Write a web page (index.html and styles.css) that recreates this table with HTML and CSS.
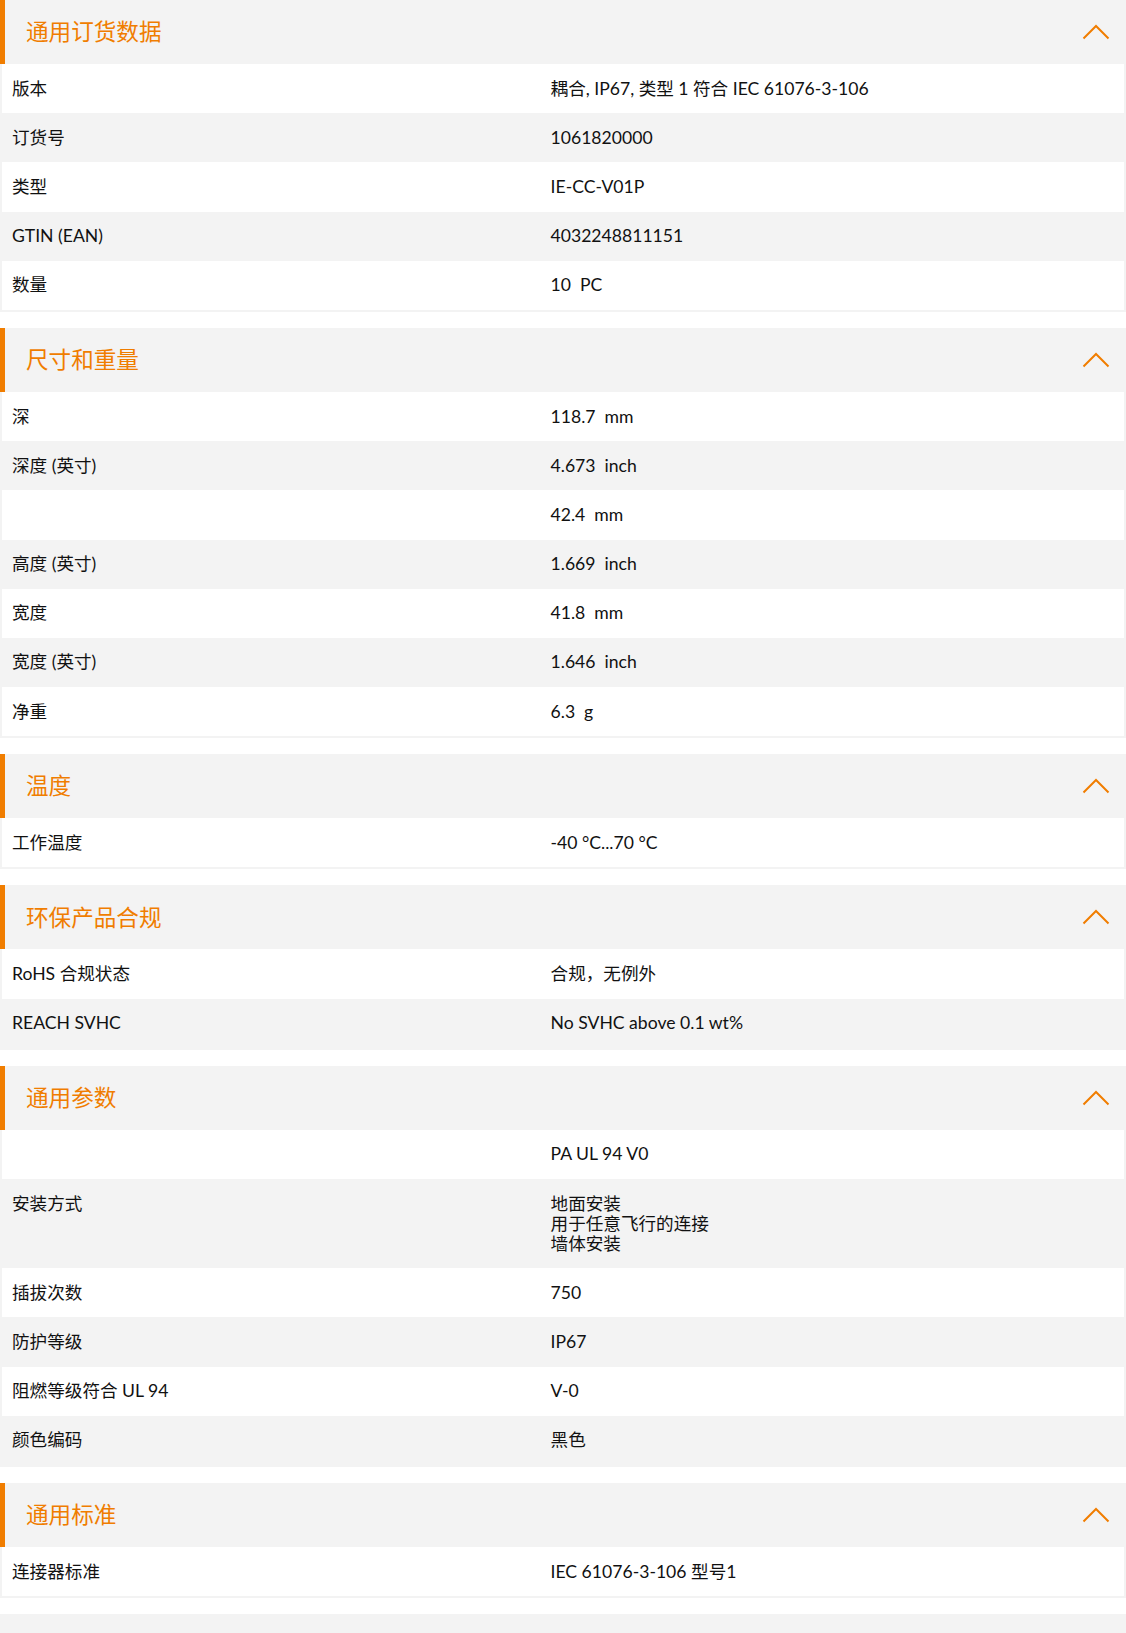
FILE: index.html
```html
<!DOCTYPE html>
<html lang="zh-CN">
<head>
<meta charset="utf-8">
<title>产品数据</title>
<link rel="stylesheet" href="styles.css">
</head>
<body>
<div class="page">

  <section class="spec">
    <div class="spec-head">
      <h2 class="spec-title">通用订货数据</h2>
      <svg class="chev" width="28" height="16" viewBox="0 0 28 16"><polyline points="1.5,14.5 14,2 26.5,14.5" fill="none" stroke="#f07d00" stroke-width="2"/></svg>
    </div>
    <div class="spec-body">
      <div class="row"><div class="k">版本</div><div class="v">耦合, IP67, 类型 1 符合 IEC 61076-3-106</div></div>
      <div class="row"><div class="k">订货号</div><div class="v">1061820000</div></div>
      <div class="row"><div class="k">类型</div><div class="v">IE-CC-V01P</div></div>
      <div class="row"><div class="k">GTIN (EAN)</div><div class="v">4032248811151</div></div>
      <div class="row"><div class="k">数量</div><div class="v">10&nbsp; PC</div></div>
    </div>
  </section>

  <section class="spec">
    <div class="spec-head">
      <h2 class="spec-title">尺寸和重量</h2>
      <svg class="chev" width="28" height="16" viewBox="0 0 28 16"><polyline points="1.5,14.5 14,2 26.5,14.5" fill="none" stroke="#f07d00" stroke-width="2"/></svg>
    </div>
    <div class="spec-body">
      <div class="row"><div class="k">深</div><div class="v">118.7&nbsp; mm</div></div>
      <div class="row"><div class="k">深度 (英寸)</div><div class="v">4.673&nbsp; inch</div></div>
      <div class="row"><div class="k"></div><div class="v">42.4&nbsp; mm</div></div>
      <div class="row"><div class="k">高度 (英寸)</div><div class="v">1.669&nbsp; inch</div></div>
      <div class="row"><div class="k">宽度</div><div class="v">41.8&nbsp; mm</div></div>
      <div class="row"><div class="k">宽度 (英寸)</div><div class="v">1.646&nbsp; inch</div></div>
      <div class="row"><div class="k">净重</div><div class="v">6.3&nbsp; g</div></div>
    </div>
  </section>

  <section class="spec">
    <div class="spec-head">
      <h2 class="spec-title">温度</h2>
      <svg class="chev" width="28" height="16" viewBox="0 0 28 16"><polyline points="1.5,14.5 14,2 26.5,14.5" fill="none" stroke="#f07d00" stroke-width="2"/></svg>
    </div>
    <div class="spec-body">
      <div class="row"><div class="k">工作温度</div><div class="v">-40 °C...70 °C</div></div>
    </div>
  </section>

  <section class="spec">
    <div class="spec-head">
      <h2 class="spec-title">环保产品合规</h2>
      <svg class="chev" width="28" height="16" viewBox="0 0 28 16"><polyline points="1.5,14.5 14,2 26.5,14.5" fill="none" stroke="#f07d00" stroke-width="2"/></svg>
    </div>
    <div class="spec-body">
      <div class="row"><div class="k">RoHS 合规状态</div><div class="v">合规，无例外</div></div>
      <div class="row"><div class="k">REACH SVHC</div><div class="v">No SVHC above 0.1 wt%</div></div>
    </div>
  </section>

  <section class="spec">
    <div class="spec-head">
      <h2 class="spec-title">通用参数</h2>
      <svg class="chev" width="28" height="16" viewBox="0 0 28 16"><polyline points="1.5,14.5 14,2 26.5,14.5" fill="none" stroke="#f07d00" stroke-width="2"/></svg>
    </div>
    <div class="spec-body">
      <div class="row"><div class="k"></div><div class="v">PA UL 94 V0</div></div>
      <div class="row"><div class="k">安装方式</div><div class="v">地面安装<br>用于任意飞行的连接<br>墙体安装</div></div>
      <div class="row"><div class="k">插拔次数</div><div class="v">750</div></div>
      <div class="row"><div class="k">防护等级</div><div class="v">IP67</div></div>
      <div class="row"><div class="k">阻燃等级符合 UL 94</div><div class="v">V-0</div></div>
      <div class="row"><div class="k">颜色编码</div><div class="v">黑色</div></div>
    </div>
  </section>

  <section class="spec">
    <div class="spec-head">
      <h2 class="spec-title">通用标准</h2>
      <svg class="chev" width="28" height="16" viewBox="0 0 28 16"><polyline points="1.5,14.5 14,2 26.5,14.5" fill="none" stroke="#f07d00" stroke-width="2"/></svg>
    </div>
    <div class="spec-body">
      <div class="row"><div class="k">连接器标准</div><div class="v">IEC 61076-3-106 型号1</div></div>
    </div>
  </section>

  <section class="spec spec-collapsed">
    <div class="spec-head spec-head-plain"></div>
  </section>

</div>
</body>
</html>
```

FILE: styles.css
```css
html, body {
  margin: 0;
  padding: 0;
  background: #ffffff;
}

body {
  font-family: Lato, "Noto Sans CJK SC", sans-serif;
  font-size: 17.6px;
  color: #111111;
}

.page {
  display: flex;
  flex-direction: column;
  gap: 16px;
}

.spec-head {
  height: 64px;
  box-sizing: border-box;
  background: #f3f3f3;
  border-left: 5px solid #f07d00;
  padding: 0 16px 0 21px;
  display: flex;
  align-items: center;
  justify-content: space-between;
}

.spec-head-plain {
  border-left: 0;
}

.spec-title {
  margin: 0;
  font-size: 22.6px;
  font-weight: 400;
  color: #f07d00;
  line-height: 1;
  padding-top: 1px;
}

.chev {
  display: block;
}

.spec-body {
  border: 2px solid #f3f3f3;
  border-top: 0;
}

.row {
  display: grid;
  grid-template-columns: 48% 52%;
  line-height: 20px;
  padding: 14.6px 0;
  background: #ffffff;
}

.row:nth-child(even) {
  background: #f3f3f3;
}

.k {
  padding-left: 10px;
}

.v {
  padding-left: 10px;
}
```
